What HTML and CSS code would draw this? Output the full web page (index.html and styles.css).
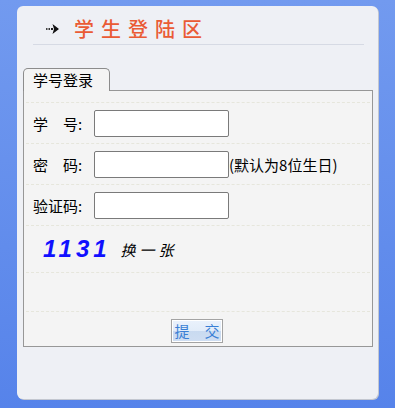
FILE: index.html
```html
<!DOCTYPE html>
<html lang="zh-CN">
<head>
<meta charset="utf-8">
<title>学生登陆区</title>
<link rel="stylesheet" href="styles.css">
</head>
<body>
<div class="panel">
  <div class="header">
    <svg class="arrow" width="13" height="10" viewBox="0 0 13 10">
      <rect x="0" y="4" width="1.5" height="2" fill="#444"/>
      <rect x="2.5" y="4" width="1.5" height="2" fill="#333"/>
      <rect x="5" y="4" width="2" height="2" fill="#222"/>
      <path d="M6.5 0 L13 5 L6.5 10 L8 5 Z" fill="#111"/>
    </svg>
    <span class="title">学生登陆区</span>
  </div>
  <div class="tabbar">
    <div class="tab">学号登录</div>
  </div>
  <div class="box">
    <div class="row">
      <span class="label">学　号:</span>
      <input class="field" type="text">
    </div>
    <div class="row">
      <span class="label">密　码:</span>
      <input class="field" type="password">
      <span class="hint">(默认为8位生日)</span>
    </div>
    <div class="row">
      <span class="label">验证码:</span>
      <input class="field" type="text">
    </div>
    <div class="row captcha-row">
      <span class="captcha">1131</span>
      <span class="refresh">换一张</span>
    </div>
    <div class="row empty-row"></div>
    <div class="actions">
      <button class="submit" type="button">提　交</button>
    </div>
  </div>
</div>
</body>
</html>
```
FILE: styles.css
```css
html, body {
  margin: 0;
  padding: 0;
}
body {
  width: 395px;
  height: 408px;
  background: linear-gradient(#729aef, #5683ea);
  font-family: "Noto Sans CJK SC", "Liberation Sans", sans-serif;
  overflow: hidden;
}
.panel {
  margin: 6px 0 0 17px;
  width: 361px;
  height: 393px;
  box-sizing: border-box;
  background: #eef0f5;
  border-radius: 6px;
  box-shadow: 1px 1px 0 #c3c7d0;
  overflow: hidden;
}
.header {
  margin: 0 14px 0 16px;
  padding: 8px 0 0 13px;
  height: 30px;
  border-bottom: 1px solid #d6dae4;
  display: flex;
  align-items: center;
}
.arrow {
  display: block;
  margin-right: 15px;
}
.title {
  font-size: 20px;
  line-height: 24px;
  letter-spacing: 7px;
  font-weight: 500;
  color: #ea5b35;
}
.tabbar {
  margin: 23px 0 0 6px;
  display: flex;
}
.tab {
  position: relative;
  z-index: 1;
  width: 87px;
  height: 23px;
  box-sizing: border-box;
  margin-bottom: -1px;
  padding-left: 9px;
  border: 1px solid #8c8c8c;
  border-bottom: none;
  border-radius: 5px 5px 0 0;
  background: #f4f4f4;
  font-size: 15px;
  line-height: 22px;
  color: #000;
}
.box {
  margin-left: 6px;
  width: 350px;
  height: 257px;
  box-sizing: border-box;
  border: 1px solid #979797;
  background: #f4f4f4;
  padding-top: 11px;
}
.row {
  margin: 0 2px;
  height: 40px;
  border-top: 1px dashed #e6e6dc;
  display: flex;
  align-items: center;
  font-size: 15px;
  color: #000;
}
.label {
  width: 61px;
  padding-left: 7px;
  flex: none;
}
.field {
  width: 135px;
  height: 27px;
  box-sizing: border-box;
  margin: 0;
  border: 1px solid #7a7a7a;
  border-radius: 2px;
  background: #fff;
  padding: 0 3px;
}
.hint {
  font-size: 15px;
}
.captcha-row {
  height: 46px;
}
.captcha {
  margin-left: 17px;
  font-family: "Liberation Sans", sans-serif;
  font-weight: bold;
  font-style: italic;
  font-size: 24px;
  letter-spacing: 4px;
  color: #1010ff;
}
.refresh {
  margin-left: 10px;
  font-style: italic;
  font-size: 15px;
  letter-spacing: 4px;
  color: #000;
}
.empty-row {
  height: 38px;
}
.actions {
  margin: 0 2px;
  border-top: 1px dashed #e6e6dc;
  padding-top: 7px;
  display: flex;
  justify-content: center;
}
.submit {
  width: 52px;
  height: 24px;
  margin: 0 0 0 -2px;
  padding: 0;
  box-sizing: border-box;
  border: 1px solid #a3a3a3;
  box-shadow: inset 0 0 0 1px #fff;
  background: linear-gradient(#eaf2fc 0%, #e2ecf9 50%, #c9daf0 51%, #cfdef2 100%);
  font-family: "Noto Sans CJK SC", sans-serif;
  font-size: 15px;
  line-height: 20px;
  color: #3a7fd5;
}
```
